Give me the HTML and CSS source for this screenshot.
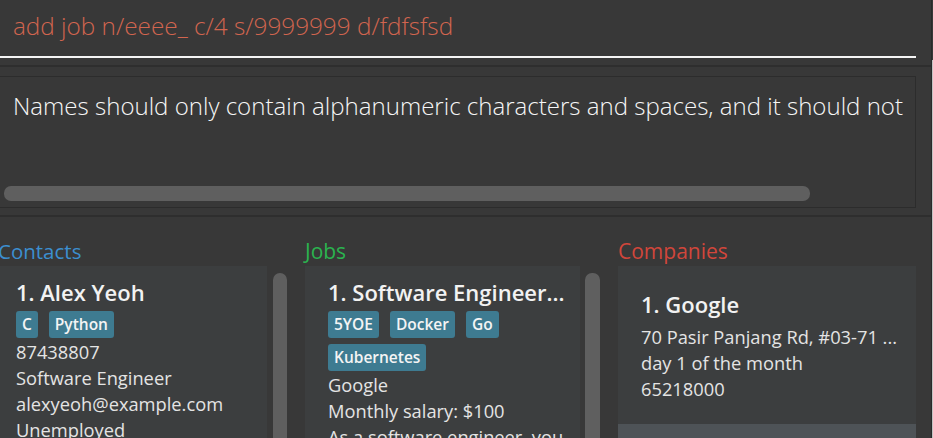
FILE: index.html
```html
<!DOCTYPE html>
<html>
<head>
<meta charset="utf-8">
<link rel="stylesheet" href="styles.css">
</head>
<body>
<div class="app">
  <main class="main">
    <div class="command-box">
      <div class="command-input">add job n/eeee_ c/4 s/9999999 d/fdfsfsd</div>
    </div>
    <div class="underline"></div>
    <div class="divider first"></div>
    <div class="result-box">
      <div class="result-text">Names should only contain alphanumeric characters and spaces, and it should not</div>
      <div class="hscroll"><div class="hthumb"></div></div>
    </div>
    <div class="divider second"></div>
    <div class="lists">
      <section class="col col-contacts">
        <h2 class="title title-contacts">Contacts</h2>
        <div class="list-body">
          <div class="cards">
            <div class="card">
              <div class="card-name">1. Alex Yeoh</div>
              <div class="tags">
                <span class="tag">C</span>
                <span class="tag">Python</span>
              </div>
              <div class="line">87438807</div>
              <div class="line">Software Engineer</div>
              <div class="line">alexyeoh@example.com</div>
              <div class="line">Unemployed</div>
            </div>
          </div>
          <div class="vscroll"></div>
        </div>
      </section>
      <section class="col col-jobs">
        <h2 class="title title-jobs">Jobs</h2>
        <div class="list-body">
          <div class="cards">
            <div class="card">
              <div class="card-name">1. Software Engineer...</div>
              <div class="tags">
                <span class="tag">5YOE</span>
                <span class="tag">Docker</span>
                <span class="tag">Go</span>
                <span class="tag">Kubernetes</span>
              </div>
              <div class="line">Google</div>
              <div class="line">Monthly salary: $100</div>
              <div class="line">As a software engineer, you</div>
            </div>
          </div>
          <div class="vscroll"></div>
        </div>
      </section>
      <section class="col col-companies">
        <h2 class="title title-companies">Companies</h2>
        <div class="list-body">
          <div class="cards">
            <div class="card company-card">
              <div class="card-name">1. Google</div>
              <div class="line">70 Pasir Panjang Rd, #03-71 ...</div>
              <div class="line">day 1 of the month</div>
              <div class="line">65218000</div>
            </div>
            <div class="card-odd"></div>
          </div>
        </div>
      </section>
    </div>
  </main>
  <aside class="edge"><div class="edge-thumb"></div></aside>
</div>
</body>
</html>
```

FILE: styles.css
```css
* { box-sizing: border-box; }

html, body {
  margin: 0;
  padding: 0;
  background: #383838;
  overflow: hidden;
}

body {
  width: 933px;
  height: 438px;
  font-family: "Open Sans", "Noto Sans", sans-serif;
  color: #e8e8e8;
}

.app {
  display: flex;
  width: 933px;
  height: 438px;
}

.main {
  width: 931px;
  display: flex;
  flex-direction: column;
  overflow: hidden;
}

.edge {
  width: 2px;
  border-left: 1px solid #2a2a2a;
  display: flex;
  flex-direction: column;
}

.edge-thumb {
  margin-top: 60px;
  flex: 1;
  background: #c4c4c4;
}

/* command box */
.command-box {
  height: 56px;
  padding: 10px 0 0 13px;
}

.command-input {
  font-size: 24.3px;
  font-weight: 300;
  color: #d2654f;
  line-height: 32px;
  white-space: nowrap;
}

.underline {
  width: 916px;
  height: 2px;
  background: #f4f4f4;
}

.divider {
  height: 2px;
  background: #2e2e2e;
  flex: none;
}

.divider.first {
  margin-top: 7px;
}

/* result display */
.result-box {
  margin-top: 9px;
  width: 916px;
  height: 132px;
  border: 1px solid #2c2c2c;
  border-left: none;
  padding: 13px 0 0 13px;
  display: flex;
  flex-direction: column;
  flex: none;
}

.result-text {
  font-size: 24.05px;
  font-weight: 300;
  color: #f6f6f6;
  line-height: 32px;
  white-space: nowrap;
}

.hscroll {
  margin-top: auto;
  margin-bottom: 6px;
  margin-left: -9px;
}

.hthumb {
  width: 806px;
  height: 15px;
  background: #5f5f5f;
  border-radius: 7px;
}

.divider.second {
  margin-top: 7px;
}

/* lists */
.lists {
  display: flex;
  flex: 1;
  min-height: 0;
}

.col {
  display: flex;
  flex-direction: column;
  min-height: 0;
}

.col-contacts { width: 305px; }
.col-jobs { width: 313px; }
.col-companies { width: 298px; }

.title {
  margin: 0;
  height: 49px;
  padding-top: 20px;
  font-size: 20.5px;
  font-weight: 400;
  line-height: 28px;
}

.title-contacts { color: #3c8fd0; margin-left: -2px; }
.title-jobs { color: #2bb34f; font-size: 21px; }
.title-companies { color: #d1463b; font-size: 21px; }

.list-body {
  display: flex;
  flex: 1;
  min-height: 0;
}

.cards {
  flex: 1;
  display: flex;
  flex-direction: column;
  min-width: 0;
}

.col-contacts .cards { flex: none; width: 267px; }
.col-jobs .cards { flex: none; width: 275px; }

.vscroll {
  margin-top: 7px;
  width: 15px;
  background: #5f5f5f;
  border-radius: 7px 7px 0 0;
}

.col-contacts .vscroll { margin-left: 6px; width: 14px; }
.col-jobs .vscroll { margin-left: 5px; }

.card {
  background: #3c3e3f;
  padding: 11px 10px 0 16px;
  flex: 1;
}

.col-jobs .card { padding-left: 23px; }

.card-name {
  font-size: 22px;
  font-weight: 600;
  color: #f2f2f2;
  line-height: 30px;
  white-space: nowrap;
  overflow: hidden;
}

.tags {
  display: flex;
  flex-wrap: wrap;
  gap: 6px 11px;
  margin: 4px 0 1px;
}

.tag {
  background: #3e7b91;
  color: #f4f4f4;
  font-size: 15.5px;
  font-weight: 600;
  line-height: 27px;
  height: 27px;
  padding: 0 6px;
  border-radius: 3px;
}

.line {
  font-size: 18.3px;
  line-height: 26px;
  color: #e4e4e4;
  white-space: nowrap;
  overflow: hidden;
}

.company-card {
  flex: none;
  height: 158px;
  padding: 23px 10px 0 23px;
}

.company-card .card-name {
  margin-bottom: 5px;
}

.card-odd {
  flex: 1;
  background: #4e5357;
}
```
